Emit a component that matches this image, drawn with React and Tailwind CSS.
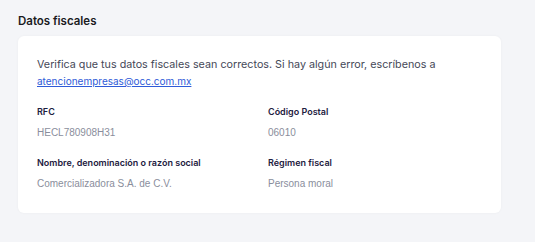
export default function App() {
  const fields = [
    { label: "RFC", value: "HECL780908H31" },
    { label: "Código Postal", value: "06010" },
    { label: "Nombre, denominación o razón social", value: "Comercializadora S.A. de C.V." },
    { label: "Régimen fiscal", value: "Persona moral" },
  ];

  return (
    <div className="min-h-[242px] w-[535px] bg-[#f4f5f8] px-[18px] pt-[12px] font-['Inter',sans-serif]">
      <h2 className="text-[11.5px] font-semibold leading-[18px] text-[#1b1b1f]">Datos fiscales</h2>
      <div className="mt-[6px] w-[483px] rounded-[6px] bg-white px-[19px] pt-[21px] pb-[22px] shadow-[0_0_3px_rgba(0,0,0,0.04)]">
        <p className="text-[10.75px] leading-[16px] text-[#454857]">
          Verifica que tus datos fiscales sean correctos. Si hay algún error, escríbenos a{" "}
          <a href="#" className="text-[10px] text-[#2f5bd8] underline">
            atencionempresas@occ.com.mx
          </a>
        </p>
        <div className="mt-[15px] grid grid-cols-[231px_1fr] gap-y-[16px]">
          {fields.map((f) => (
            <div key={f.label} className="flex flex-col gap-[6px]">
              <span className="text-[9px] font-semibold leading-[14px] text-[#1d2040]">{f.label}</span>
              <span className="font-['Liberation_Sans',sans-serif] text-[10px] leading-[15px] text-[#8a8e9c]">
                {f.value}
              </span>
            </div>
          ))}
        </div>
      </div>
    </div>
  );
}
